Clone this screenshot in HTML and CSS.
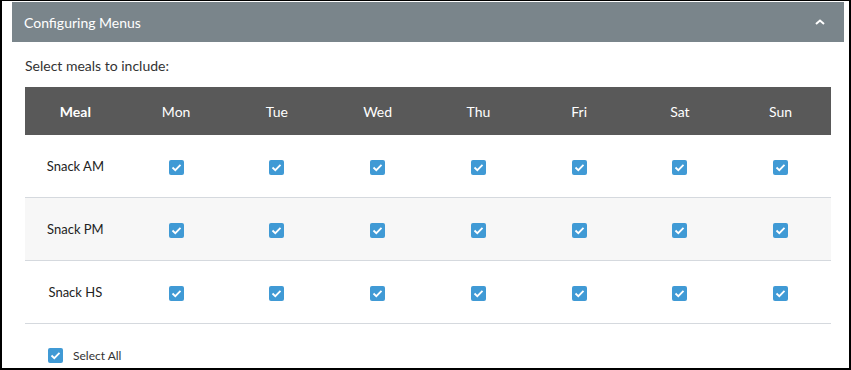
FILE: index.html
```html
<!DOCTYPE html>
<html>
  <head>
    <title>Configuring Menus</title>
    <meta name="viewport" content="width=device-width, initial-scale=1.0" />
    <link rel="stylesheet" href="styles.css">
  </head>
  <body>
    <div class="frame">
      <section class="panel">
        <header class="panel-head">
          <span>Configuring Menus</span>
          <svg class="chevron" width="10" height="6" viewBox="0 0 10 6">
            <path d="M1 5 L5 1.5 L9 5" fill="none" stroke="#fff" stroke-width="2"/>
          </svg>
        </header>
        <div class="panel-body">
          <p class="intro">Select meals to include:</p>
          <table class="meals">
            <thead>
              <tr>
                <th class="meal-col">Meal</th>
                <th>Mon</th><th>Tue</th><th>Wed</th><th>Thu</th><th>Fri</th><th>Sat</th><th>Sun</th>
              </tr>
            </thead>
            <tbody>
              <tr>
                <td>Snack AM</td>
                <td><span class="check"></span></td><td><span class="check"></span></td><td><span class="check"></span></td><td><span class="check"></span></td><td><span class="check"></span></td><td><span class="check"></span></td><td><span class="check"></span></td>
              </tr>
              <tr class="alt">
                <td>Snack PM</td>
                <td><span class="check"></span></td><td><span class="check"></span></td><td><span class="check"></span></td><td><span class="check"></span></td><td><span class="check"></span></td><td><span class="check"></span></td><td><span class="check"></span></td>
              </tr>
              <tr>
                <td>Snack HS</td>
                <td><span class="check"></span></td><td><span class="check"></span></td><td><span class="check"></span></td><td><span class="check"></span></td><td><span class="check"></span></td><td><span class="check"></span></td><td><span class="check"></span></td>
              </tr>
            </tbody>
          </table>
          <label class="select-all"><span class="check"></span>Select All</label>
        </div>
      </section>
    </div>
  </body>
</html>
```

FILE: styles.css
```css
body {
  margin: 0;
  font-family: Lato, "Open Sans", sans-serif;
  color: #333;
}

.frame {
  box-sizing: border-box;
  width: 851px;
  height: 370px;
  border: 2px solid #000;
  border-top-width: 1px;
  padding: 1px 5px 0 10px;
  overflow: hidden;
  background: #fff;
}

.panel-head {
  display: flex;
  align-items: center;
  justify-content: space-between;
  height: 40px;
  padding: 0 19px 0 12px;
  background: #7a858b;
  color: #fff;
  font-size: 14px;
}

.chevron {
  display: block;
}

.panel-body {
  padding: 0 13px;
}

.intro {
  margin: 0;
  padding-top: 14px;
  margin-bottom: 11px;
  font-size: 14px;
  line-height: 20px;
  color: #333;
}

.meals {
  width: 100%;
  table-layout: fixed;
  border-collapse: collapse;
}

.meals th {
  height: 48px;
  padding: 0;
  background: #595959;
  color: #fff;
  font-size: 14px;
  font-weight: 400;
  text-align: center;
}

.meals th.meal-col {
  font-weight: 700;
}

.meals td {
  height: 62px;
  padding: 0;
  text-align: center;
  font-size: 13px;
  color: #222;
  border-bottom: 1px solid #d5d9de;
}

.meals tr.alt td {
  background: #f7f7f7;
}

.check {
  display: inline-block;
  width: 15px;
  height: 15px;
  border-radius: 2px;
  background: #409ad5 url("data:image/svg+xml,%3Csvg xmlns='http://www.w3.org/2000/svg' width='15' height='15'%3E%3Cpath d='M3.5 7.5 L6.3 10.2 L11.5 4.8' fill='none' stroke='%23fff' stroke-width='1.8'/%3E%3C/svg%3E") no-repeat center;
  vertical-align: middle;
}

.select-all {
  display: flex;
  align-items: center;
  gap: 10px;
  margin-top: 24px;
  padding-left: 23px;
  font-size: 12px;
  color: #333;
}
```
